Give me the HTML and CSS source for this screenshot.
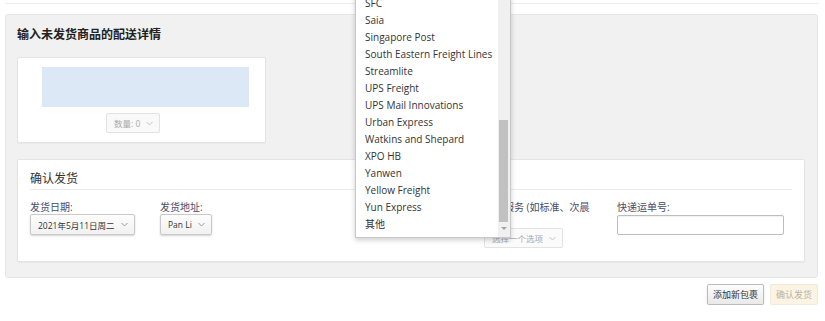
FILE: index.html
```html
<!DOCTYPE html>
<html lang="zh-CN">
<head>
  <meta charset="UTF-8">
  <meta name="viewport" content="width=device-width, initial-scale=1.0">
  <link rel="stylesheet" href="styles.css">
</head>
<body>
  <div class="top-strip"></div>

  <div class="panel">
    <h2 class="panel-title">输入未发货商品的配送详情</h2>

    <div class="card items">
      <div class="item-slot"></div>
      <span class="select qty">数量: 0
        <svg class="chev" width="7" height="5" viewBox="0 0 7 5"><polyline points="0.5,1 3.5,4 6.5,1" /></svg>
      </span>
    </div>

    <div class="card confirm">
      <h3 class="card-title">确认发货</h3>
      <div class="fields">
        <div class="field f-date">
          <label>发货日期:</label>
          <span class="select">2021年5月11日周二
            <svg class="chev" width="7" height="5" viewBox="0 0 7 5"><polyline points="0.5,1 3.5,4 6.5,1" /></svg>
          </span>
        </div>
        <div class="field f-addr">
          <label>发货地址:</label>
          <span class="select">Pan Li
            <svg class="chev" width="7" height="5" viewBox="0 0 7 5"><polyline points="0.5,1 3.5,4 6.5,1" /></svg>
          </span>
        </div>
        <!-- carrier select sits under the open list -->
        <div class="field f-carrier"></div>
        <div class="field f-service">
          <label>快递服务 (如标准、次晨达） ：</label>
          <span class="select disabled">选择一个选项
            <svg class="chev" width="7" height="5" viewBox="0 0 7 5"><polyline points="0.5,1 3.5,4 6.5,1" /></svg>
          </span>
        </div>
        <div class="field f-track">
          <label>快递运单号:</label>
          <input class="text-input" type="text">
        </div>
      </div>
    </div>
  </div>

  <div class="actions">
    <button class="btn">添加新包裹</button>
    <button class="btn btn-primary" disabled>确认发货</button>
  </div>

  <!-- open carrier list -->
  <div class="dropdown">
    <ul class="options">
      <li>SFC</li>
      <li>Saia</li>
      <li>Singapore Post</li>
      <li>South Eastern Freight Lines</li>
      <li>Streamlite</li>
      <li>UPS Freight</li>
      <li>UPS Mail Innovations</li>
      <li>Urban Express</li>
      <li>Watkins and Shepard</li>
      <li>XPO HB</li>
      <li>Yanwen</li>
      <li>Yellow Freight</li>
      <li>Yun Express</li>
      <li>其他</li>
    </ul>
    <div class="scrollbar">
      <div class="thumb"></div>
      <div class="arrow"></div>
    </div>
  </div>
</body>
</html>
```

FILE: styles.css
```css
html {
  margin: 0;
  padding: 0;
}

body {
  margin: 0;
  background-color: #fff;
  font-family: "Open Sans", "Noto Sans CJK SC", sans-serif;
  font-size: 10px;
  color: #333;
  position: relative;
}

.top-strip {
  height: 3px;
  margin: 0 7px 0 5px;
  border-bottom: 1px solid #ececec;
}

.panel {
  margin: 10px 7px 0 5px;
  padding: 12px 12px 15px 11px;
  background-color: #f1f1f1;
  border: 1px solid #e6e6e6;
  border-radius: 3px;
}

.panel-title {
  margin: 0 0 14px 0;
  font-size: 12px;
  font-weight: 700;
  line-height: 16px;
  color: #222;
}

.card {
  background-color: #fff;
  border: 1px solid #e4e4e4;
  border-radius: 2px;
  box-shadow: 0 1px 1px rgba(0,0,0,0.04);
}

.items {
  width: 247px;
  height: 75px;
  display: flex;
  flex-direction: column;
  align-items: flex-start;
  padding-top: 9px;
}

.item-slot {
  width: 207px;
  height: 40px;
  margin: 0 0 6px 24px;
  background-color: #dde8f6;
}

.select {
  display: inline-flex;
  align-items: center;
  gap: 6px;
  height: 19px;
  padding: 0 6px 0 7px;
  font-size: 8.5px;
  color: #333;
  background: linear-gradient(#fdfdfd, #f1f1f1);
  border: 1px solid #c9c9c9;
  border-radius: 2px;
  box-shadow: 0 1px 2px rgba(0,0,0,0.18);
  white-space: nowrap;
}

.chev {
  fill: none;
  stroke: #9a9a9a;
  stroke-width: 1;
}

.select.qty {
  height: 18px;
  margin-left: 88px;
  color: #aaa;
  background: #f9f9f9;
  border-color: #e2e2e2;
  box-shadow: none;
}

.select.disabled {
  height: 18px;
  color: #a8a8a8;
  background: #fbfbfb;
  border-color: #e3e3e3;
  box-shadow: none;
}

.select.disabled .chev,
.select.qty .chev {
  stroke: #c4c4c4;
}

.confirm {
  margin-top: 16px;
  padding: 11px 12px 13px 12px;
}

.card-title {
  margin: 0;
  padding-bottom: 2px;
  font-size: 12px;
  font-weight: 400;
  line-height: 16px;
  color: #333;
  border-bottom: 1px solid #ececec;
}

.fields {
  display: flex;
  margin-top: 10px;
}

.field {
  display: flex;
  flex-direction: column;
  align-items: flex-start;
}

.field label {
  font-size: 10px;
  line-height: 14px;
  color: #4b4b6a;
}

.f-date { width: 130px; }
.f-addr { width: 195px; }
.f-carrier { width: 129px; }
.f-service { width: 133px; }
.f-service label { width: 110px; }
.f-track { width: 170px; }

.text-input {
  box-sizing: border-box;
  width: 167px;
  height: 20px;
  margin: 1px 0 0 0;
  border: 1px solid #bdbdbd;
  border-radius: 2px;
  box-shadow: inset 0 1px 1px rgba(0,0,0,0.06);
}

.actions {
  display: flex;
  justify-content: flex-end;
  gap: 6px;
  margin: 6px 7px 0 0;
}

.btn {
  height: 21px;
  margin: 0;
  padding: 0 5px;
  font-family: "Open Sans", "Noto Sans CJK SC", sans-serif;
  font-size: 9px;
  color: #333;
  background: linear-gradient(#fdfdfd, #e9e9e9);
  border: 1px solid #bcbcbc;
  border-radius: 2px;
  box-shadow: 0 1px 2px rgba(0,0,0,0.15);
}

.btn-primary {
  color: #b9b2a3;
  background: #fbf4e4;
  border-color: #f2ead9;
  box-shadow: none;
}

/* native-looking popup over the form */
.dropdown {
  position: absolute;
  left: 355px;
  top: -6px;
  width: 154px;
  height: 242px;
  background-color: #fff;
  border: 1px solid #c8c8c8;
  box-shadow: 0 2px 5px rgba(0,0,0,0.2);
  overflow: hidden;
}

.options {
  list-style: none;
  margin: 0;
  padding: 0;
}

.options li {
  height: 17px;
  line-height: 17px;
  padding-left: 9px;
  font-size: 10px;
  color: #333;
  white-space: nowrap;
}

.scrollbar {
  position: absolute;
  top: 0;
  right: 0;
  bottom: 0;
  width: 12px;
  background-color: #f0f0f0;
}

.thumb {
  position: absolute;
  left: 1px;
  right: 2px;
  top: 125px;
  height: 102px;
  background-color: #c1c1c1;
}

.arrow {
  position: absolute;
  left: 3px;
  bottom: 7px;
  width: 0;
  height: 0;
  border-left: 3px solid transparent;
  border-right: 3px solid transparent;
  border-top: 3px solid #a3a3a3;
}
```
